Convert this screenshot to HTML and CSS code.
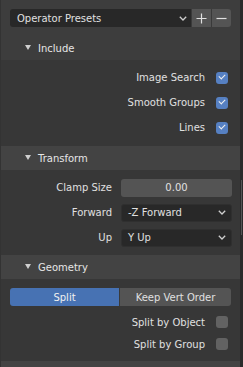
FILE: index.html
```html
<!DOCTYPE html>
<html>
<head>
<meta charset="utf-8">
<link rel="stylesheet" href="styles.css">
</head>
<body>
<div class="app">
  <div class="main">
    <div class="presets">
      <div class="menu">
        <span>Operator Presets</span>
        <svg class="chev" width="8" height="5" viewBox="0 0 8 5"><path d="M0.8 0.8 L4 4 L7.2 0.8" fill="none" stroke="#cfcfcf" stroke-width="1.3"/></svg>
      </div>
      <div class="pbtn plus"><svg width="11" height="11" viewBox="0 0 11 11"><path d="M5.5 0.5 V10.5 M0.5 5.5 H10.5" stroke="#e0e0e0" stroke-width="1.2"/></svg></div>
      <div class="pbtn minus"><svg width="11" height="11" viewBox="0 0 11 11"><path d="M0.5 5.5 H10.5" stroke="#e0e0e0" stroke-width="1.2"/></svg></div>
    </div>

    <div class="header first"><span class="tri"></span>Include</div>
    <div class="body b1">
      <div class="crow"><span>Image Search</span><span class="cb on"></span></div>
      <div class="crow"><span>Smooth Groups</span><span class="cb on"></span></div>
      <div class="crow"><span>Lines</span><span class="cb on"></span></div>
    </div>

    <div class="header"><span class="tri"></span>Transform</div>
    <div class="body b2">
      <div class="frow"><span class="lbl">Clamp Size</span><div class="field num">0.00</div></div>
      <div class="frow"><span class="lbl">Forward</span><div class="field sel"><span>-Z Forward</span><svg class="chev" width="8" height="5" viewBox="0 0 8 5"><path d="M0.8 0.8 L4 4 L7.2 0.8" fill="none" stroke="#cfcfcf" stroke-width="1.3"/></svg></div></div>
      <div class="frow"><span class="lbl">Up</span><div class="field sel"><span>Y Up</span><svg class="chev" width="8" height="5" viewBox="0 0 8 5"><path d="M0.8 0.8 L4 4 L7.2 0.8" fill="none" stroke="#cfcfcf" stroke-width="1.3"/></svg></div></div>
    </div>

    <div class="header"><span class="tri"></span>Geometry</div>
    <div class="body b3">
      <div class="seg"><div class="opt active">Split</div><div class="opt">Keep Vert Order</div></div>
      <div class="crow small"><span>Split by Object</span><span class="cb off"></span></div>
      <div class="crow small"><span>Split by Group</span><span class="cb off"></span></div>
    </div>
    <div class="stub"></div>
  </div>
  <div class="strip"><div class="thumb"></div></div>
</div>
</body>
</html>
```

FILE: styles.css
```css
html, body {
  margin: 0;
  padding: 0;
  background: #3d3d3d;
}
body {
  font-family: "DejaVu Sans", sans-serif;
  font-size: 10px;
  color: #e0e0e0;
}
.app {
  display: flex;
  width: 243px;
  height: 367px;
  overflow: hidden;
}
.main {
  width: 240px;
  display: flex;
  flex-direction: column;
  background: #3d3d3d;
  border-left: 1px solid #333;
  box-sizing: border-box;
}
.strip {
  width: 3px;
  background: #2a2a2a;
  position: relative;
}
.thumb {
  position: absolute;
  left: 1px;
  top: 180px;
  width: 1px;
  height: 55px;
  background: #555;
}
.presets {
  display: flex;
  height: 18px;
  margin: 9px 9px 0 9px;
}
.menu {
  flex: 1;
  background: #282828;
  border-radius: 3px 0 0 3px;
  display: flex;
  align-items: center;
  justify-content: space-between;
  padding: 0 4px 0 7px;
  font-size: 10px;
  color: #e0e0e0;
}
.menu .chev { margin-top: 1px; }
.pbtn {
  width: 19px;
  background: #545454;
  display: flex;
  align-items: center;
  justify-content: center;
}
.plus { border-left: 1px solid #3a3a3a; }
.minus {
  border-left: 1px solid #3a3a3a;
  border-radius: 0 3px 3px 0;
  width: 19px;
}
.header {
  height: 24px;
  display: flex;
  align-items: center;
  padding-left: 24px;
  background: #434343;
  color: #e6e6e6;
  font-size: 10px;
}
.header.first {
  margin-top: 9px;
  background: #3d3d3d;
}
.tri {
  width: 0;
  height: 0;
  border-left: 3px solid transparent;
  border-right: 3px solid transparent;
  border-top: 5px solid #cfcfcf;
  margin-right: 7px;
  margin-top: -1px;
}
.body {
  background: #373737;
  display: flex;
  flex-direction: column;
}
.b1 { padding: 5px 0 6px; }
.b2 { padding: 5px 0 5px; }
.b3 { padding: 9px 0 6px; }
.crow {
  height: 25px;
  display: flex;
  align-items: center;
  justify-content: flex-end;
  padding-right: 12px;
  gap: 11px;
}
.crow.small { height: 22px; }
.cb {
  width: 12px;
  height: 12px;
  border-radius: 3px;
  box-sizing: border-box;
  position: relative;
}
.cb.on {
  background: #5680c2;
}
.cb.on::after {
  content: "";
  position: absolute;
  left: 3px;
  top: 2px;
  width: 5px;
  height: 3px;
  border-left: 1.5px solid #f0f0f0;
  border-bottom: 1.5px solid #f0f0f0;
  transform: rotate(-45deg);
}
.cb.off {
  background: #676767;
  background-image: radial-gradient(circle, #5d5d5d 0.6px, transparent 0.8px);
  background-size: 2px 2px;
}
.frow {
  height: 25px;
  display: flex;
  align-items: center;
}
.lbl {
  width: 111px;
  text-align: right;
  padding-right: 9px;
  box-sizing: border-box;
  flex: none;
  width: 120px;
}
.field {
  width: 111px;
  height: 18px;
  border-radius: 3px;
  box-sizing: border-box;
  display: flex;
  align-items: center;
}
.field.num {
  background: #545454;
  justify-content: center;
}
.field.sel {
  background: #282828;
  border: 1px solid #2f2f2f;
  justify-content: space-between;
  padding: 0 5px 0 6px;
}
.seg {
  display: flex;
  height: 18px;
  margin: 0 9px 5px 9px;
}
.opt {
  display: flex;
  align-items: center;
  justify-content: center;
  background: #545454;
  flex: 1;
  border-radius: 0 3px 3px 0;
  border-left: 1px solid #3a3a3a;
}
.opt.active {
  flex: none;
  width: 109px;
  background: #4772b3;
  border-radius: 3px 0 0 3px;
  border-left: none;
  color: #f0f0f0;
}
.stub {
  flex: 1;
  background: #434343;
}
```
